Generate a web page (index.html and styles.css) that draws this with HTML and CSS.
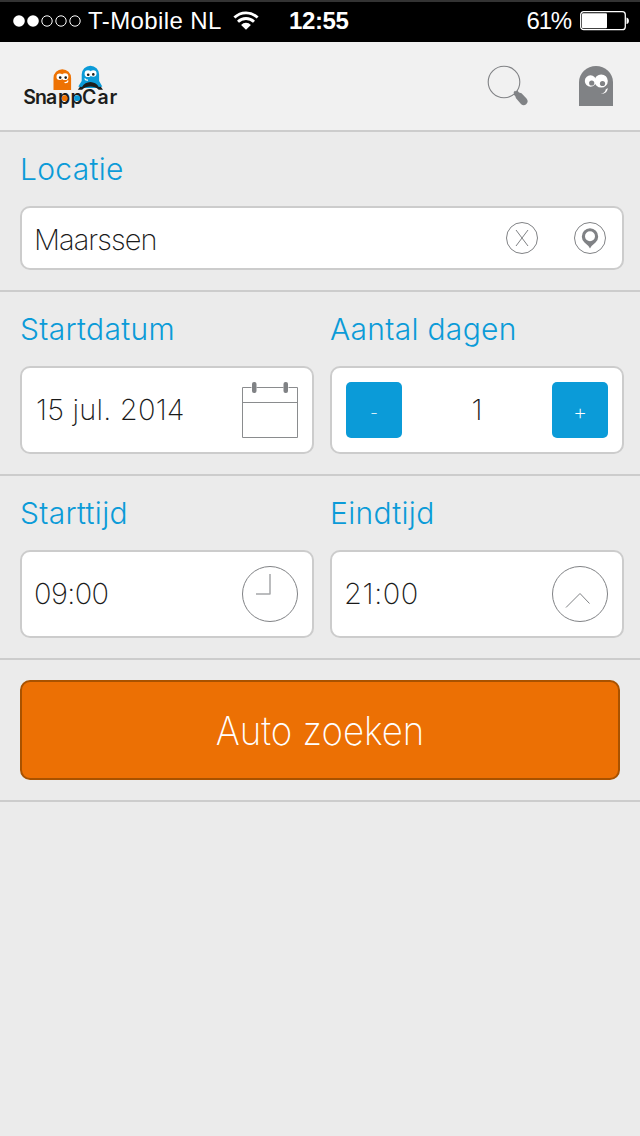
FILE: index.html
```
<!DOCTYPE html>
<html lang="nl">
<head>
  <meta charset="UTF-8">
  <meta name="viewport" content="width=device-width, initial-scale=1.0">
  <title>SnappCar – Auto zoeken</title>
  <link rel="stylesheet" href="styles.css">
</head>
<body>

  <div class="statusbar">
    <svg class="signal" width="68" height="14" viewBox="0 0 68 14">
      <g fill="#fff"><circle cx="6" cy="7" r="5.8"/><circle cx="20" cy="7" r="5.8"/></g>
      <g fill="none" stroke="#fff" stroke-width="1"><circle cx="34" cy="7" r="5.2"/><circle cx="48" cy="7" r="5.2"/><circle cx="62" cy="7" r="5.2"/></g>
    </svg>
    <span class="carrier">T-Mobile NL</span>
    <svg class="wifi" width="26" height="20" viewBox="0 0 26 20">
      <g fill="none" stroke="#fff" stroke-width="2.8">
        <path d="M1.4 6.6a16.4 16.4 0 0 1 23.2 0"/>
        <path d="M5 10.8a11.3 11.3 0 0 1 16 0"/>
      </g>
      <path fill="#fff" d="M13 18.8l-4.9-4.9a6.9 6.9 0 0 1 9.8 0z"/>
    </svg>
    <span class="clock">12:55</span>
    <span class="percent">61%</span>
    <svg class="battery" width="50" height="20" viewBox="0 0 50 20">
      <rect x="0.7" y="0.7" width="44.6" height="18" rx="3" fill="none" stroke="#fff" stroke-width="1.3"/>
      <rect x="2" y="2.2" width="25" height="15" rx="1" fill="#fff"/>
      <path d="M46.5 6.5c3.2.4 3.2 6.2 0 6.6z" fill="#fff"/>
    </svg>
  </div>

  <header class="header">
    <svg class="logo" width="96" height="44" viewBox="0 0 96 44">
      <path fill="#ee7203" d="M30.500 26V14a8.800 8.800 0 0 1 17.600 0v12z"/>
      <g fill="#fff"><circle cx="36.700" cy="12.700" r="3.200"/><circle cx="42" cy="12.700" r="3.400"/></g>
      <g fill="#1d1d1b"><circle cx="37.200" cy="13.600" r="1.300"/><circle cx="42.700" cy="13.600" r="1.300"/></g>
      <path d="M41.500 18.500q3 .5 3.600-2" fill="none" stroke="#fff" stroke-width="1.200"/>
      <path fill="#0b9bd8" d="M58.700 17V10.500a8.700 8.700 0 0 1 17.400 0V17l3.200 5.500-5 1.500h-14l-5-1.500z"/>
      <g fill="#fff"><circle cx="65" cy="9.700" r="3.400"/><circle cx="70.300" cy="9.500" r="3.200"/></g>
      <g fill="#1d1d1b"><circle cx="65.200" cy="10.800" r="1.300"/><circle cx="70.300" cy="10.400" r="1.300"/></g>
      <path d="M61.800 14.300q.4 2.200 3.200 1.800" fill="none" stroke="#fff" stroke-width="1.200"/>
      <path fill="#1d1d1b" d="M54.800 25.700l2.200-3 2 .2q3-4.700 8.400-4.900 5.400.2 8.400 4.900l2-.2 2.200 3h-4.300q-3.300-3.300-8.300-3.300t-8.300 3.300z"/>
      <text class="logo-text" x="0.2 12 23 35 47.500 59 74.500 86.500" y="39.500">SnappCar</text>
      <circle cx="41.700" cy="34.200" r="2.900" fill="#ee7203"/>
      <circle cx="54.200" cy="34.200" r="2.900" fill="#0b9bd8"/>
    </svg>
    <div class="header-icons">
      <svg width="42" height="42" viewBox="0 0 42 42">
        <circle cx="17" cy="17" r="15.800" fill="none" stroke="#808285" stroke-width="1.100"/>
        <path fill="#808285" d="M26.500 29.500l.8-1.200-.8-1 1.500-1.500 1 .8 1.500-.8 1.500 1.700 2.500.8 5 5.200q2.500 3-.3 5.700-2.500 2.200-5 0l-5.200-6-.8-2.200z"/>
      </svg>
      <svg width="34" height="42" viewBox="0 0 34 42">
        <path fill="#808285" d="M0 41V17a17 16 0 0 1 34 0v24z"/>
        <circle cx="11.500" cy="16" r="5.700" fill="#fff"/>
        <circle cx="22.200" cy="16" r="6.600" fill="#fff"/>
        <g fill="#808285"><circle cx="12.700" cy="18" r="2.600"/><circle cx="23.500" cy="18.500" r="2.600"/></g>
        <path d="M28.700 23q.3 5.500-7 6 4.700-1.500 5-4.500z" fill="#fff"/>
      </svg>
    </div>
  </header>

  <form id="searchForm">
    <section class="row">
      <div class="field">
        <label>Locatie</label>
        <div class="box box-small">
          <span class="value value-loc">Maarssen</span>
          <div class="loc-icons">
            <svg width="32" height="32" viewBox="0 0 32 32" fill="none" stroke="#808285">
              <circle cx="16" cy="16" r="15.500"/>
              <path d="M10 8l12 16M22 8L10 24"/>
            </svg>
            <svg width="32" height="32" viewBox="0 0 32 32">
              <circle cx="16" cy="16" r="15.500" fill="none" stroke="#808285"/>
              <path fill="#808285" fill-rule="evenodd" d="M16 26.500Q14.500 23.500 10.500 20.500A8.200 8.200 0 1 1 21.500 20.500Q17.500 23.500 16 26.500zM16 9.200a5 5 0 1 0 0 10 5 5 0 0 0 0-10z"/>
            </svg>
          </div>
        </div>
      </div>
    </section>

    <section class="row">
      <div class="field">
        <label>Startdatum</label>
        <div class="box">
          <span class="value value-date">15 jul. 2014</span>
          <svg width="56" height="56" viewBox="0 0 56 56">
            <path d="M9.500 5.500H.5v50h55v-50h-9M14.500 5.500h27M.5 20.500h55" fill="none" stroke="#8a8c8e"/>
            <g fill="#808285"><rect x="10" y="0" width="4.500" height="11" rx="2"/><rect x="41.500" y="0" width="4.500" height="11" rx="2"/></g>
          </svg>
        </div>
      </div>
      <div class="field">
        <label>Aantal dagen</label>
        <div class="box box-days">
          <button type="button" class="step">-</button>
          <span class="value">1</span>
          <button type="button" class="step plus">+</button>
        </div>
      </div>
    </section>

    <section class="row">
      <div class="field">
        <label>Starttijd</label>
        <div class="box">
          <span class="value value-start">09:00</span>
          <svg width="56" height="56" viewBox="0 0 56 56" fill="none" stroke="#808285">
            <circle cx="28" cy="28" r="27.500"/>
            <path d="M28 8v20.500M14 28h14" stroke="#a5a7a9" stroke-width="1.500"/>
          </svg>
        </div>
      </div>
      <div class="field">
        <label>Eindtijd</label>
        <div class="box">
          <span class="value value-end">21:00</span>
          <svg width="56" height="56" viewBox="0 0 56 56" fill="none" stroke="#808285">
            <circle cx="28" cy="28" r="27.500"/>
            <path d="M14 41.500l14-14 9.500 10"/>
          </svg>
        </div>
      </div>
    </section>

    <section class="row">
      <button type="submit" class="submit"><span>Auto zoeken</span></button>
    </section>
  </form>

</body>
</html>
```
FILE: styles.css
```
* {
  box-sizing: border-box;
}

body {
  margin: 0;
  min-height: 1136px;
  background: #ebebeb;
  color: #1a1a1a;
  font-family: Inter, "Liberation Sans", sans-serif;
}

svg {
  display: block;
  flex: none;
}

/* phone status bar */
.statusbar {
  display: flex;
  align-items: center;
  height: 42px;
  padding: 0 10px 2px 13px;
  border-top: 2px solid #333;
  background: #000;
  color: #fff;
  font-family: "Liberation Sans", sans-serif;
  font-size: 24px;
  line-height: 38px;
  white-space: nowrap;
}

.carrier {
  width: 140px;
  margin-left: 7px;
  letter-spacing: 0.4px;
}

.wifi {
  margin-left: 5px;
}

.clock {
  margin-left: 30px;
  font-weight: bold;
  letter-spacing: -0.4px;
}

.percent {
  margin-left: auto;
  letter-spacing: -1.2px;
}

.battery {
  margin-left: 9px;
}

/* header */
.header {
  display: flex;
  justify-content: space-between;
  align-items: center;
  height: 90px;
  padding: 0 27px 0 23px;
  border-bottom: 2px solid #ccc;
  background: #f1f1f1;
}

.logo-text {
  font-size: 19.5px;
  font-weight: 600;
  fill: #1d1d1b;
}

.header-icons {
  display: flex;
  gap: 50px;
}

/* search form */
.row {
  display: flex;
  gap: 16px;
  padding: 20px 16px 20px 20px;
  border-bottom: 2px solid #ccc;
}

.field {
  flex: 1;
}

label {
  display: block;
  height: 54px;
  color: #0b9bd8;
  font-size: 30px;
  font-weight: 300;
  line-height: 35px;
  letter-spacing: 0.3px;
}

.box {
  display: flex;
  justify-content: space-between;
  align-items: center;
  height: 88px;
  padding: 0 14px 0 12px;
  border: 2px solid #ccc;
  border-radius: 10px;
  background: #fff;
}

.box-small {
  height: 64px;
  padding-right: 16px;
}

.box-days {
  padding-left: 14px;
}

.value {
  font-size: 29px;
  font-weight: 200;
  line-height: 36px;
}

.value-loc {
  padding-top: 4px;
  letter-spacing: -0.95px;
}

.value-date {
  padding-left: 2px;
  letter-spacing: 0.2px;
}

.value-start {
  letter-spacing: -0.6px;
}

.value-end {
  letter-spacing: 0.6px;
}

.loc-icons {
  display: flex;
  gap: 36px;
}

.step {
  width: 56px;
  height: 56px;
  padding: 4px 0 0;
  border: none;
  border-radius: 5px;
  background: #0b9bd8;
  color: #fff;
  font-family: inherit;
  font-size: 18px;
  font-weight: 200;
}

.plus {
  font-size: 22px;
}

.submit {
  width: 600px;
  height: 100px;
  border: 2px solid #a85200;
  border-radius: 10px;
  background: #ec7004;
  color: #fff;
  font-family: inherit;
  font-size: 40px;
  font-weight: 200;
}

.submit span {
  display: inline-block;
  transform: scaleX(0.915);
}
```
